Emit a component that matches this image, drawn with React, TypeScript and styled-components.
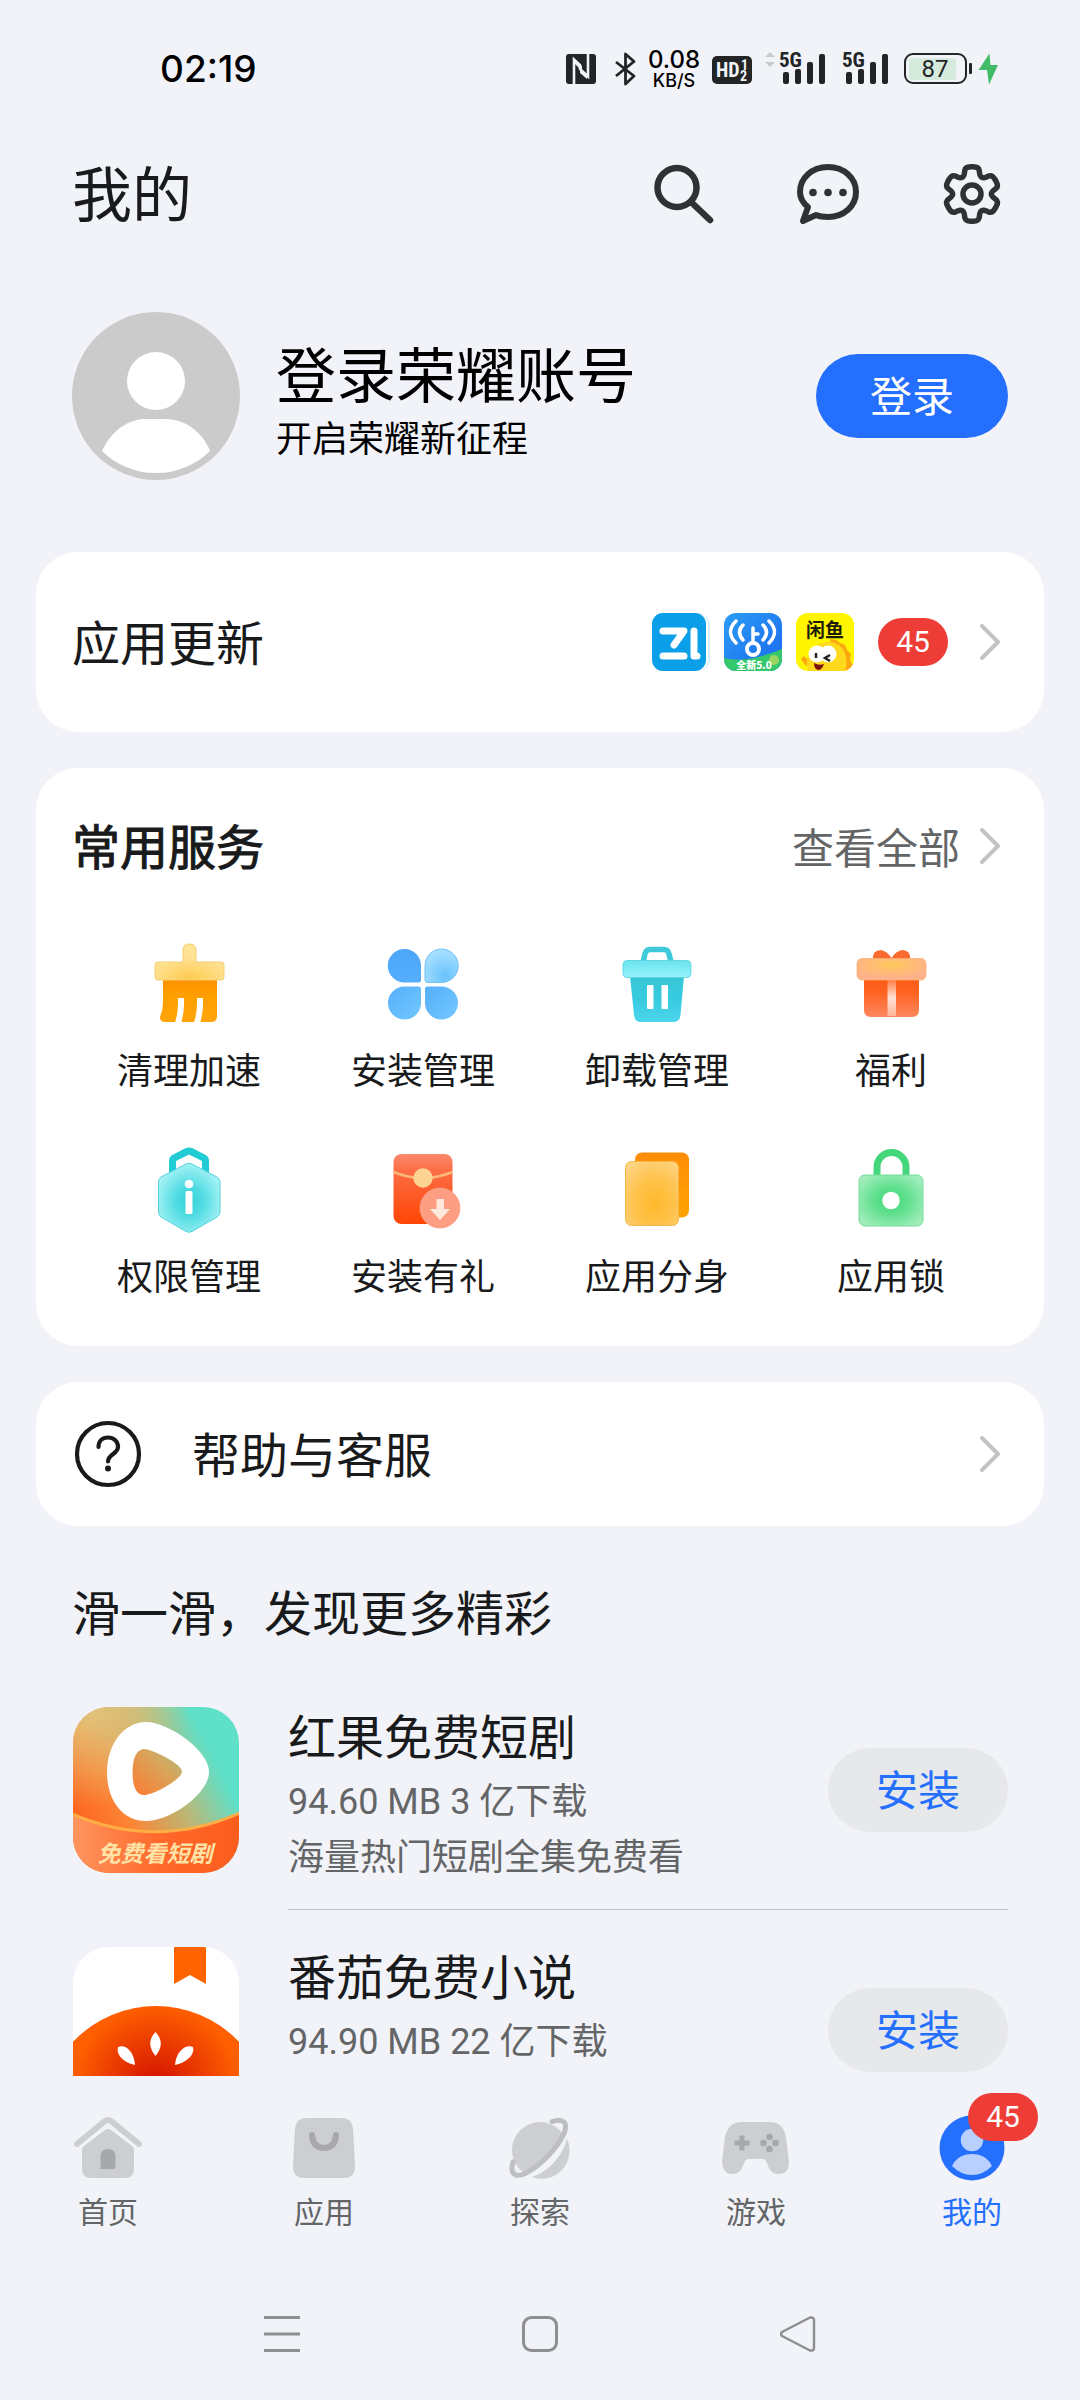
import React from "react";
import styled, { createGlobalStyle } from "styled-components";

const color = {
  page: "#f1f3f8",
  card: "#ffffff",
  ink: "#191a1b",
  muted: "#646567",
  blue: "#256fff",
  red: "#ee3d36",
  line: "#bfc0c5",
};
const cjk = '"Noto Sans CJK SC", "Noto Sans", sans-serif';
const latin = 'Roboto, "Noto Sans CJK SC", sans-serif';

const GlobalStyle = createGlobalStyle`
  * { box-sizing: border-box; }
  body { margin: 0; background: ${color.page}; }
  h1, h2, h3, p, ul { margin: 0; padding: 0; font-weight: 400; }
  ul { list-style: none; }
  button { border: 0; padding: 0; background: none; font: inherit; color: inherit; cursor: pointer; }
  a { color: inherit; text-decoration: none; }
  svg { display: block; flex: none; }
`;

const Screen = styled.div`
  display: flex;
  flex-direction: column;
  height: 100vh;
  background: ${color.page};
  color: ${color.ink};
  font-family: ${cjk};
`;

/* ---------- status bar ---------- */
const StatusBar = styled.div`
  flex: none;
  display: flex;
  align-items: center;
  justify-content: space-between;
  height: 138px;
  padding: 0 82px 0 160px;
  color: #000;
`;
const Clock = styled.time`
  font: 500 37px/44px Inter, sans-serif;
`;
const StatusIcons = styled.div`
  display: flex;
  align-items: center;
  gap: 12px;
`;
const NetSpeed = styled.div`
  display: flex;
  flex-direction: column;
  align-items: center;
  width: 52px;
  padding-top: 2px;
  white-space: nowrap;
  font: 500 24px/22px Inter, sans-serif;
  small {
    font-size: 18px;
    line-height: 20px;
  }
`;

/* ---------- header ---------- */
const Header = styled.header`
  flex: none;
  display: flex;
  align-items: center;
  justify-content: space-between;
  height: 112px;
  padding: 0 72px;
`;
const PageTitle = styled.h1`
  padding-bottom: 6px;
  font-size: 60px;
  line-height: 80px;
`;
const HeaderActions = styled.div`
  display: flex;
  gap: 72px;
`;

/* ---------- content ---------- */
const Content = styled.main`
  flex: 1;
  min-height: 0;
  overflow: hidden;
`;
const Profile = styled.section`
  display: flex;
  align-items: center;
  gap: 36px;
  padding: 62px 72px 72px;
  color: #000;
`;
const ProfileText = styled.div`
  flex: 1;
`;
const ProfileName = styled.h2`
  font-size: 60px;
  line-height: 80px;
`;
const ProfileHint = styled.p`
  font-size: 36px;
  line-height: 48px;
`;
const PillButton = styled.button<{ $primary?: boolean }>`
  flex: none;
  width: ${(p) => (p.$primary ? 192 : 180)}px;
  height: 84px;
  padding-bottom: 4px;
  border-radius: 42px;
  font-size: 42px;
  line-height: 56px;
  background: ${(p) => (p.$primary ? color.blue : "#e7e8e9")};
  color: ${(p) => (p.$primary ? "#fff" : color.blue)};
`;
const Cards = styled.div`
  display: flex;
  flex-direction: column;
  gap: 36px;
  padding: 0 36px;
`;
const Card = styled.section`
  padding: 0 36px;
  border-radius: 42px;
  background: ${color.card};
`;
const CardLink = styled.a<{ $tall?: boolean }>`
  display: flex;
  align-items: center;
  gap: 24px;
  height: ${(p) => (p.$tall ? 180 : 144)}px;
`;
const CardTitle = styled.h2<{ $strong?: boolean }>`
  flex: 1;
  padding-bottom: 4px;
  font-size: 48px;
  line-height: 64px;
  -webkit-text-stroke: ${(p) => (p.$strong ? "1px" : "0")} currentColor;
`;
const HelpTitle = styled(CardTitle)`
  padding-left: 24px;
`;
const AppIcons = styled.span`
  display: flex;
  gap: 14px;
`;
const Badge = styled.span`
  display: flex;
  align-items: center;
  justify-content: center;
  width: 70px;
  height: 48px;
  border-radius: 24px;
  background: ${color.red};
  color: #fff;
  font: 400 30px/36px ${latin};
`;
const ServicesHead = styled.div`
  display: flex;
  align-items: center;
  padding: 36px 0 48px;
  height: 168px;
`;
const MoreLink = styled.a`
  display: flex;
  align-items: center;
  gap: 12px;
  font-size: 42px;
  line-height: 56px;
  color: ${color.muted};
`;
const ServiceGrid = styled.ul`
  display: grid;
  grid-template-columns: repeat(4, 1fr);
  row-gap: 50px;
  padding-bottom: 48px;
`;
const ServiceButton = styled.button`
  display: flex;
  flex-direction: column;
  align-items: center;
  gap: 12px;
  width: 100%;
  font-size: 36px;
  line-height: 48px;
`;

/* ---------- recommendations ---------- */
const FeedTitle = styled.h2`
  padding: 52px 72px 28px;
  font-size: 48px;
  line-height: 64px;
`;
const FeedItem = styled.li`
  display: flex;
  align-items: center;
  gap: 48px;
  padding: 0 72px;
`;
const FeedBody = styled.div`
  flex: 1;
  display: flex;
  align-items: center;
  height: 240px;
  padding: 28px 0;
  border-bottom: 1px solid ${color.line};
`;
const FeedText = styled.div`
  flex: 1;
  align-self: stretch;
`;
const AppName = styled.h3`
  font-size: 48px;
  line-height: 72px;
`;
const AppMeta = styled.p`
  font-size: 36px;
  line-height: 56px;
  color: ${color.muted};
`;
const Figures = styled.span`
  font-family: ${latin};
  line-height: 40px;
`;

/* ---------- bottom bars ---------- */
const TabBar = styled.nav`
  flex: none;
  display: grid;
  grid-template-columns: repeat(5, 1fr);
  padding: 36px 0 38px;
`;
const Tab = styled.a<{ $active?: boolean }>`
  display: flex;
  flex-direction: column;
  align-items: center;
  gap: 6px;
  font-size: 30px;
  line-height: 40px;
  color: ${(p) => (p.$active ? color.blue : color.muted)};
`;
const TabIcon = styled.span`
  position: relative;
`;
const TabBadge = styled(Badge)`
  position: absolute;
  left: 32px;
  top: -19px;
`;
const SystemBar = styled.div`
  flex: none;
  display: flex;
  align-items: center;
  justify-content: center;
  gap: 222px;
  height: 132px;
`;

/* ---------- drawings ---------- */
const Chevron = () => (
  <svg width="36" height="36" viewBox="0 0 36 36" fill="none" stroke="#c3c4c6" strokeWidth="4" strokeLinecap="round" strokeLinejoin="round">
    <path d="M10 2L26 18L10 34" />
  </svg>
);

const narrow = { fontFamily: '"Liberation Sans Narrow", "Roboto Condensed", "Liberation Sans", sans-serif', fontWeight: 700 };

const Nfc = () => (
  <svg width="37" height="36" viewBox="0 0 37 36">
    <rect y="3" width="30" height="30" rx="3" fill="#222426" />
    <path d="M8 33V8.500L14 14V18L22 25.500V3" fill="none" stroke={color.page} strokeWidth="2.600" />
    <path d="M9 10L16 15V20L9 13ZM14 19L21 24V28L14 22Z" fill={color.page} />
  </svg>
);
const Bluetooth = () => (
  <svg width="21" height="36" viewBox="0 0 21 36" fill="none" stroke="#222426" strokeWidth="2.800" strokeLinejoin="round">
    <path d="M1 11L19 25L10.500 33V3L19 10.500L1 25" />
  </svg>
);
const HdBadge = () => (
  <svg width="40" height="36" viewBox="0 0 40 36" fill={color.page} style={narrow}>
    <rect y="5" width="40" height="28" rx="5" fill="#222426" />
    <text x="4" y="26" fontSize="20">HD</text>
    <text x="29" y="19" fontSize="14">1</text>
    <text x="28" y="30" fontSize="14">2</text>
  </svg>
);
const Signal = ({ arrows }: { arrows?: boolean }) => {
  const left = arrows ? 15 : 0;
  const width = arrows ? 66 : 50;
  return (
    <svg width={width} height="48" viewBox={`0 -6 ${width} 48`} fill="#222426" style={narrow}>
      {arrows && <path d="M1 6L6 1L11 6ZM1 11H11L6 16Z" fill="#c9cacd" />}
      <text x={left} y="16" fontSize="21">5G</text>
      {[21, 18, 11, 3].map((top, i) => (
        <rect key={top} x={left + 4 + i * 12} y={top} width="6" height={33 - top} rx="2" />
      ))}
    </svg>
  );
};
const Battery = () => (
  <svg width="94" height="36" viewBox="0 0 94 36">
    <rect x="5" y="7" width="47" height="22" rx="3" fill="#d5e9dd" />
    <rect x="1" y="3" width="61" height="29" rx="8" fill="none" stroke="#222426" strokeWidth="2" />
    <rect x="65" y="12" width="3" height="11" rx="1" fill="#222426" />
    <text x="31" y="26" fontSize="24" textAnchor="middle" fontFamily="Roboto, sans-serif" fill="#222426">87</text>
    <path d="M85.500 2.500L74.500 19H83L85 33.500L94 14H86.500Z" fill="#42bb68" />
  </svg>
);

const SearchIcon = () => (
  <svg width="72" height="72" viewBox="0 0 72 72" fill="none" stroke="#2f3133" strokeWidth="6.500" strokeLinecap="round">
    <circle cx="29" cy="29.500" r="19.500" />
    <path d="M43 44L62 62" />
  </svg>
);
const ChatIcon = () => (
  <svg width="72" height="72" viewBox="0 0 72 72" fill="none" stroke="#2f3133" strokeWidth="6" strokeLinejoin="round">
    <path d="M24 57L11 63L16 49C11 45 8 40 8 34C8 20 20 9 36 9S64 20 64 34S52 59 36 59C31.500 59 27.500 58.500 24 57Z" />
    <g fill="#2f3133" stroke="none">
      <circle cx="21" cy="34.500" r="3.800" />
      <circle cx="36" cy="34.500" r="3.800" />
      <circle cx="51" cy="34.500" r="3.800" />
    </g>
  </svg>
);
/* Six teeth around the hub; every corner is cut back a third of its sides and rounded. */
const gearCorners = [0, 60, 120, 180, 240, 300].flatMap((tooth) =>
  [[-24, 19.5], [-14, 28], [14, 28], [24, 19.5]].map(([offset, r]) => {
    const a = ((tooth + offset - 90) * Math.PI) / 180;
    return [36 + r * Math.cos(a), 36 + r * Math.sin(a)];
  })
);
const gearPath =
  gearCorners
    .map((corner, i) => {
      const before = gearCorners[(i + 23) % 24];
      const after = gearCorners[(i + 1) % 24];
      const toward = (p: number[]) => [0, 1].map((k) => (corner[k] + (p[k] - corner[k]) * 0.42).toFixed(2)).join(" ");
      const at = corner.map((v) => v.toFixed(2)).join(" ");
      return `${i ? "L" : "M"}${toward(before)}Q${at} ${toward(after)}`;
    })
    .join("") + "Z";
const GearIcon = () => (
  <svg width="72" height="72" viewBox="0 0 72 72" fill="none" stroke="#2f3133" strokeWidth="5.500" strokeLinejoin="round">
    <path d={gearPath} />
    <circle cx="36" cy="36" r="9" />
  </svg>
);

const Avatar = () => (
  <svg width="168" height="168" viewBox="0 0 168 168" fill="#fff">
    <circle cx="84" cy="84" r="84" fill="#cbcbcb" />
    <circle cx="84" cy="69" r="29" />
    <path d="M30 139C40 117 58 107 74 107H94C112 107 130 119 138 139A77 77 0 0 1 30 139Z" />
  </svg>
);

const ZhihangApp = () => (
  <svg width="58" height="58" viewBox="0 0 58 58">
    <rect width="58" height="58" rx="12" fill="#d9effb" />
    <rect width="56" height="58" rx="11" fill="#fff" />
    <rect width="54" height="58" rx="11" fill="#0a9fe8" />
    <path d="M11 18H32L22 32M11 43H32M42 18V43H45" fill="none" stroke="#fff" strokeWidth="7" strokeLinecap="round" strokeLinejoin="round" />
  </svg>
);
const WifiKeyApp = () => (
  <svg width="58" height="58" viewBox="0 0 58 58">
    <defs>
      <clipPath id="wifiClip"><rect width="58" height="58" rx="12" /></clipPath>
      <linearGradient id="wifiBlue" x1="0" y1="0" x2="1" y2="1">
        <stop offset="0" stopColor="#2b9cf5" />
        <stop offset="1" stopColor="#1968ee" />
      </linearGradient>
    </defs>
    <g clipPath="url(#wifiClip)">
      <rect width="58" height="58" fill="url(#wifiBlue)" />
      <path d="M0 45Q22 51 58 36V58H0Z" fill="#35c76b" />
      <circle cx="50" cy="47" r="5" fill="#9bd663" />
      <g fill="none" stroke="#fff" strokeWidth="3.500" strokeLinecap="round">
        <path d="M12 8Q1 19 12 30M19 12Q12 19 19 27M45 8Q56 19 45 30M39 12Q46 19 39 27" />
        <circle cx="29" cy="36" r="6" strokeWidth="4" />
        <path d="M29 30V15M29 21H34" />
      </g>
      <text x="30" y="56" fontSize="10" fontWeight="900" textAnchor="middle" fill="#fff">全新5.0</text>
    </g>
  </svg>
);
const XianyuApp = () => (
  <svg width="58" height="58" viewBox="0 0 58 58">
    <defs>
      <clipPath id="fishClip"><rect width="58" height="58" rx="12" /></clipPath>
    </defs>
    <g clipPath="url(#fishClip)">
      <rect width="58" height="58" fill="#fff500" />
      <path d="M34 26L40 27L44 30L49 32L51 37L55 41L54 47L57 52L54 58H40Z" fill="#fca70f" />
      <path d="M5 46L8 43L13 48L10 53Z" fill="#fca70f" />
      <path d="M12 58C8 42 16 31 31 29C46 28 54 42 49 58Z" fill="#ffd91c" />
      <circle cx="21" cy="41" r="8.500" fill="#fff" />
      <circle cx="32" cy="41" r="8.500" fill="#fff" />
      <path d="M20 40V45M34 42L29 45L34 48" fill="none" stroke="#222" strokeWidth="2.500" />
      <path d="M18 50Q23 53 28 51Q26 57 22 57Q18 56 18 50Z" fill="#7b1410" />
      <text x="29" y="24" fontSize="19" fontWeight="700" textAnchor="middle" fill="#1c1b08">闲鱼</text>
    </g>
  </svg>
);

const BroomIcon = () => (
  <svg width="96" height="96" viewBox="0 0 96 96">
    <defs>
      <linearGradient id="bristle" x1="0" y1="0" x2="0" y2="1">
        <stop offset="0" stopColor="#fb8f00" />
        <stop offset=".4" stopColor="#ff9f00" />
        <stop offset="1" stopColor="#ffa409" />
      </linearGradient>
      <radialGradient id="broomHead" cx=".5" cy=".95" r=".6">
        <stop offset="0" stopColor="#ffcb50" />
        <stop offset="1" stopColor="#ffe294" />
      </radialGradient>
    </defs>
    <path d="M22 42H76V80Q76 86 70 86H24Q19 86 19 81Q22 74 22 66Z" fill="url(#bristle)" />
    <path d="M40 62V68Q40 77 37 87M59 62V68Q59 77 56 87" fill="none" stroke="#fff" strokeWidth="6" />
    <path d="M42 14Q42 8 48 8Q55 8 55 14V26H80Q83 26 83 29V41Q83 44 80 44H17Q14 44 14 41V29Q14 26 17 26H42Z" fill="url(#broomHead)" stroke="#f3cf74" strokeWidth="1" />
  </svg>
);
const CloverIcon = () => (
  <svg width="96" height="96" viewBox="0 0 96 96">
    <defs>
      <linearGradient id="leafA" x1="0" y1="0" x2="0" y2="1">
        <stop offset="0" stopColor="#4ba6f9" />
        <stop offset="1" stopColor="#54aefc" />
      </linearGradient>
      <radialGradient id="leafB" cx=".6" cy=".8" r=".8">
        <stop offset="0" stopColor="#69c3fd" />
        <stop offset="1" stopColor="#aae1ff" />
      </radialGradient>
      <linearGradient id="leafC" x1="0" y1="0" x2="1" y2="1">
        <stop offset="0" stopColor="#55affc" />
        <stop offset="1" stopColor="#72c8fd" />
      </linearGradient>
    </defs>
    <path d="M29.500 13A16.500 16.500 0 0 1 46 29.500V44Q46 46.500 43.500 46.500H29.500A16.500 16.500 0 0 1 29.500 13Z" fill="url(#leafA)" />
    <path d="M66.500 13A16.500 16.500 0 0 1 66.500 46.500H52.500Q50 46.500 50 44V29.500A16.500 16.500 0 0 1 66.500 13Z" fill="url(#leafB)" stroke="#5bb4f5" strokeWidth=".8" />
    <path d="M29.500 50.500H43.500Q46 50.500 46 53V67.500A16.500 16.500 0 1 1 29.500 50.500Z" fill="url(#leafC)" />
    <path d="M52.500 50.500H66.500A16.500 16.500 0 1 1 50 67.500V53Q50 50.500 52.500 50.500Z" fill="url(#leafC)" />
  </svg>
);
const TrashIcon = () => (
  <svg width="96" height="96" viewBox="0 0 96 96">
    <defs>
      <linearGradient id="bin" x1="0" y1="0" x2="0" y2="1">
        <stop offset="0" stopColor="#35c5d6" />
        <stop offset=".5" stopColor="#38cbe0" />
        <stop offset="1" stopColor="#4cd5ec" />
      </linearGradient>
      <linearGradient id="binLid" x1="0" y1="0" x2="0" y2="1">
        <stop offset="0" stopColor="#68e3ee" />
        <stop offset="1" stopColor="#97f3fb" />
      </linearGradient>
    </defs>
    <path d="M34 26L36 18Q37 13.500 41 13.500H55Q59 13.500 60 18L62 26" fill="none" stroke="#3fcadb" strokeWidth="5.500" />
    <path d="M21 40H75L71.500 79Q71 86 64 86H32Q25.500 86 25 79Z" fill="url(#bin)" />
    <rect x="14" y="24.500" width="68" height="17" rx="4" fill="url(#binLid)" stroke="#57cfdd" strokeWidth=".8" />
    <rect x="38" y="49" width="6.500" height="24" rx="1" fill="#fff" />
    <rect x="52.500" y="49" width="6.500" height="24" rx="1" fill="#fff" />
  </svg>
);
const GiftIcon = () => (
  <svg width="96" height="96" viewBox="0 0 96 96">
    <defs>
      <linearGradient id="giftBox" x1="0" y1="0" x2="0" y2="1">
        <stop offset="0" stopColor="#fb5b11" />
        <stop offset=".4" stopColor="#ff6524" />
        <stop offset="1" stopColor="#fd875f" />
      </linearGradient>
      <radialGradient id="giftLid" cx=".5" cy=".3" r=".6">
        <stop offset="0" stopColor="#ffc95c" />
        <stop offset="1" stopColor="#ffb28a" />
      </radialGradient>
      <linearGradient id="ribbon" x1="0" y1="0" x2="0" y2="1">
        <stop offset="0" stopColor="#ff7d42" />
        <stop offset=".5" stopColor="#ffe2d6" />
        <stop offset="1" stopColor="#ffb498" />
      </linearGradient>
    </defs>
    <path d="M30 24Q29 14 38 14Q44 15 48.500 22Q53 15 59 14Q68 14 67 24Z" fill="#fb6a2f" />
    <path d="M21 42H76V74Q76 81 69 81H28Q21 81 21 74Z" fill="url(#giftBox)" />
    <rect x="44.500" y="44" width="8.500" height="36" fill="url(#ribbon)" />
    <rect x="14" y="22.500" width="69" height="21.500" rx="5" fill="url(#giftLid)" stroke="#f6b078" strokeWidth=".8" />
  </svg>
);
const PermissionIcon = () => (
  <svg width="96" height="96" viewBox="0 0 96 96">
    <defs>
      <radialGradient id="shield" cx=".5" cy=".55" r=".55">
        <stop offset="0" stopColor="#2fd2da" />
        <stop offset=".4" stopColor="#50dce2" />
        <stop offset="1" stopColor="#a5f2f5" />
      </radialGradient>
    </defs>
    <path d="M31.500 34V19Q31.500 17 33 16L46 9.500Q48 8.500 50 9.500L63 16Q64.500 17 64.500 19V34" fill="none" stroke="#22ccd4" strokeWidth="7" />
    <path d="M45 22Q48 20.500 51 22L76 35Q79 37 79 40V70Q79 73 76 75L51 89.500Q48 91 45 89.500L20 75Q17.500 73 17.500 70V40Q17.500 37 20 35Z" fill="url(#shield)" stroke="#55d3da" strokeWidth="1" />
    <circle cx="48" cy="42" r="4.300" fill="#fff" />
    <rect x="44.500" y="49" width="7" height="23" rx="1.500" fill="#fff" />
  </svg>
);
const RedPacketIcon = () => (
  <svg width="96" height="96" viewBox="0 0 96 96">
    <defs>
      <linearGradient id="packet" x1="0" y1="0" x2="0" y2="1">
        <stop offset="0" stopColor="#fa8a6c" />
        <stop offset=".25" stopColor="#fd6c44" />
        <stop offset=".6" stopColor="#fe5a26" />
        <stop offset="1" stopColor="#ff4503" />
      </linearGradient>
    </defs>
    <rect x="18.500" y="12" width="59" height="70" rx="8" fill="url(#packet)" />
    <path d="M18.500 30Q48 42 77.500 30" fill="none" stroke="#ffb877" strokeWidth="2.500" />
    <circle cx="48" cy="36" r="9.700" fill="#fdd493" />
    <circle cx="65" cy="66" r="20" fill="#fd9d82" stroke="#f5a08b" strokeWidth=".8" />
    <path d="M61.500 57H69V67H75L65 78L55 67H61.500Z" fill="#ffe9dc" />
  </svg>
);
const CloneIcon = () => (
  <svg width="96" height="96" viewBox="0 0 96 96">
    <defs>
      <linearGradient id="cloneBack" x1="0" y1="0" x2="0" y2="1">
        <stop offset="0" stopColor="#fd8d06" />
        <stop offset="1" stopColor="#ffa405" />
      </linearGradient>
      <radialGradient id="cloneFront" cx=".55" cy=".65" r=".75">
        <stop offset="0" stopColor="#ffb92c" />
        <stop offset=".5" stopColor="#ffc24b" />
        <stop offset="1" stopColor="#ffd483" />
      </radialGradient>
    </defs>
    <rect x="26" y="10.500" width="54" height="65" rx="7" fill="url(#cloneBack)" />
    <rect x="16.500" y="19.500" width="53" height="64" rx="6" fill="url(#cloneFront)" stroke="#f2b748" strokeWidth="1" />
  </svg>
);
const LockIcon = () => (
  <svg width="96" height="96" viewBox="0 0 96 96">
    <defs>
      <radialGradient id="lockBody" cx=".5" cy=".5" r=".6">
        <stop offset="0" stopColor="#46d879" />
        <stop offset=".4" stopColor="#5cdf8b" />
        <stop offset="1" stopColor="#a0edbb" />
      </radialGradient>
    </defs>
    <path d="M34 34V25A14 14 0 0 1 63 25V34" fill="none" stroke="#43d67a" strokeWidth="7" />
    <rect x="16" y="33" width="64" height="51" rx="6" fill="url(#lockBody)" stroke="#74dc98" strokeWidth="1" />
    <circle cx="48" cy="58.500" r="8.700" fill="#fff" />
  </svg>
);

const HelpIcon = () => (
  <svg width="72" height="72" viewBox="0 0 72 72" fill="none" stroke="#191a1b" strokeWidth="4.200" strokeLinecap="round">
    <circle cx="36" cy="36" r="31" />
    <path d="M26.500 29C26.500 23 30.500 19.500 36 19.500S46 23 46 29C46 36 36 36 36 43.500" />
    <circle cx="36" cy="50.500" r="3" fill="#191a1b" stroke="none" />
  </svg>
);

const DramaApp = () => (
  <svg width="168" height="168" viewBox="0 0 168 168">
    <defs>
      <clipPath id="dramaClip"><rect x="1" y="1" width="166" height="166" rx="36" /></clipPath>
      <linearGradient id="dramaBase" x1="0" y1=".75" x2="1" y2=".25">
        <stop offset="0" stopColor="#ff5d1c" />
        <stop offset=".3" stopColor="#fb8534" />
        <stop offset=".6" stopColor="#b9b878" />
        <stop offset=".85" stopColor="#5fe0c8" />
      </linearGradient>
      <radialGradient id="dramaWarm" cx=".1" cy="0" r=".6">
        <stop offset="0" stopColor="#e0c67e" />
        <stop offset="1" stopColor="#e0c67e" stopOpacity="0" />
      </radialGradient>
      <linearGradient id="dramaInner" x1="0" y1="1" x2="1" y2="0">
        <stop offset="0" stopColor="#fb7b30" />
        <stop offset=".6" stopColor="#d9a45a" />
        <stop offset="1" stopColor="#a9be82" />
      </linearGradient>
      <linearGradient id="dramaBand" x1="0" y1="0" x2="1" y2="0">
        <stop offset="0" stopColor="#ff9560" />
        <stop offset=".5" stopColor="#ff6a2c" />
        <stop offset="1" stopColor="#fb5c1c" />
      </linearGradient>
    </defs>
    <g clipPath="url(#dramaClip)">
      <rect width="168" height="168" fill="url(#dramaBase)" />
      <rect width="168" height="168" fill="url(#dramaWarm)" />
      <path d="M0 108Q84 144 168 107V168H0Z" fill="url(#dramaBand)" />
      <path d="M0 108Q84 144 168 107" fill="none" stroke="#ffad45" strokeWidth="3" />
      <path d="M35 66C35 38 52 16 74 16C96 16 137 44 137 66C137 88 98 115 74 115C50 115 35 94 35 66Z" fill="#fff" />
      <path d="M60.500 66C60.500 52 65 43 72 43C80 43 110 58 110 65.500C110 73 82 89 72 89C64 89 60.500 80 60.500 66Z" fill="url(#dramaInner)" />
      <text x="83" y="156" fontSize="23" fontWeight="700" fontStyle="italic" textAnchor="middle" fill="#ffe2a6">免费看短剧</text>
    </g>
  </svg>
);
const NovelApp = () => (
  <svg width="168" height="168" viewBox="0 0 168 168">
    <defs>
      <clipPath id="novelClip"><rect x="1" y="1" width="166" height="166" rx="36" /></clipPath>
      <radialGradient id="tomato" gradientUnits="userSpaceOnUse" cx="84" cy="142" r="88">
        <stop offset="0" stopColor="#d00c00" />
        <stop offset=".4" stopColor="#e43000" />
        <stop offset=".95" stopColor="#ff5f00" />
      </radialGradient>
    </defs>
    <g clipPath="url(#novelClip)">
      <rect width="168" height="168" fill="#fff" />
      <circle cx="84" cy="174" r="114" fill="url(#tomato)" />
      <path d="M102 0H134V38L118 29L102 38Z" fill="#fd6400" />
      <g fill="#fff">
        <path d="M83.500 86Q94 97 83.500 110Q73 97 83.500 86Z" />
        <path d="M63 119C50 116 44 108 46 101C54 98 62 106 63 119Z" />
        <path d="M103 119C116 116 123 108 121 101C113 98 104 106 103 119Z" />
      </g>
    </g>
  </svg>
);

const tabGrey = "#cdced0";
const tabDark = "#a7a8aa";
const HomeTab = () => (
  <svg width="72" height="72" viewBox="0 0 72 72" fill={tabGrey}>
    <path d="M5 32L33 9Q36 7 39 9L67 32" fill="none" stroke={tabGrey} strokeWidth="6" strokeLinecap="round" />
    <path d="M33 18Q36 16 39 18L60 34Q62 36 62 38V57Q62 66 53 66H19Q10 66 10 57V38Q10 36 12 34Z" />
    <path d="M28.500 57V45Q28.500 37 36 37T43.500 45V55Q43.500 57 41.500 57Z" fill={tabDark} />
  </svg>
);
const AppsTab = () => (
  <svg width="72" height="72" viewBox="0 0 72 72">
    <path d="M19 6H53Q64 6 65 17L67 54Q67 66 56 66H16Q5 66 5 54L7 17Q8 6 19 6Z" fill={tabGrey} />
    <path d="M24 23Q25 36 36 36T48 23" fill="none" stroke={tabDark} strokeWidth="6" strokeLinecap="round" />
  </svg>
);
const ExploreTab = () => (
  <svg width="72" height="72" viewBox="0 0 72 72" fill="none">
    <circle cx="36" cy="38" r="28" fill={tabGrey} />
    <g transform="translate(35 36) rotate(-46)">
      <path d="M-36 -1A36 13 0 0 0 36 -1V26H-36Z" transform="translate(0 2)" fill={color.page} />
    </g>
    <path d="M63 27A28 28 0 0 1 28 65C42 61 58 46 63 27Z" fill={tabGrey} />
    <g transform="translate(35 36) rotate(-46)" stroke="#bebfc1" strokeWidth="5" strokeLinecap="round">
      <path d="M-28 -9C-34 -6 -36 -3 -36 0C-36 7 -20 12 0 12S36 7 36 0C36 -3 34 -6 28 -9" />
    </g>
  </svg>
);
const GamesTab = () => (
  <svg width="72" height="72" viewBox="0 0 72 72" fill={tabDark}>
    <path d="M22 10H50Q63 10 66 25L69 50Q69 62 59 62Q52 62 49 56L46 49Q45 47 43 47H28Q26 47 25 49L22 56Q19 62 12 62Q3 62 2 50L5 25Q8 10 22 10Z" fill={tabGrey} />
    <path d="M19.500 23.500H24.500V28.500H29.500V33.500H24.500V38.500H19.500V33.500H14.500V28.500H19.500Z" />
    <circle cx="49.500" cy="25" r="3.300" />
    <circle cx="49.500" cy="37" r="3.300" />
    <circle cx="43.500" cy="31" r="3.300" />
    <circle cx="55.500" cy="31" r="3.300" />
  </svg>
);
const MineTab = () => (
  <svg width="72" height="72" viewBox="0 0 72 72" fill="#b9d0ff">
    <circle cx="36" cy="36" r="32.500" fill={color.blue} />
    <circle cx="36" cy="28" r="11.200" />
    <path d="M16 54Q22 42 36 42T56 54Q47 63 36 63T16 54Z" />
  </svg>
);

const services = [
  { label: "清理加速", icon: <BroomIcon /> },
  { label: "安装管理", icon: <CloverIcon /> },
  { label: "卸载管理", icon: <TrashIcon /> },
  { label: "福利", icon: <GiftIcon /> },
  { label: "权限管理", icon: <PermissionIcon /> },
  { label: "安装有礼", icon: <RedPacketIcon /> },
  { label: "应用分身", icon: <CloneIcon /> },
  { label: "应用锁", icon: <LockIcon /> },
];
const feed = [
  { name: "红果免费短剧", figures: "94.60 MB 3", intro: "海量热门短剧全集免费看", icon: <DramaApp /> },
  { name: "番茄免费小说", figures: "94.90 MB 22", intro: "", icon: <NovelApp /> },
];
const tabs = [
  { label: "首页", icon: <HomeTab /> },
  { label: "应用", icon: <AppsTab /> },
  { label: "探索", icon: <ExploreTab /> },
  { label: "游戏", icon: <GamesTab /> },
  { label: "我的", icon: <MineTab />, badge: 45 },
];

export default function App() {
  return (
    <Screen>
      <GlobalStyle />
      <StatusBar>
        <Clock>02:19</Clock>
        <StatusIcons>
          <Nfc />
          <Bluetooth />
          <NetSpeed>
            <span>0.08</span>
            <small>KB/S</small>
          </NetSpeed>
          <HdBadge />
          <Signal arrows />
          <Signal />
          <Battery />
        </StatusIcons>
      </StatusBar>

      <Header>
        <PageTitle>我的</PageTitle>
        <HeaderActions>
          <button aria-label="搜索"><SearchIcon /></button>
          <button aria-label="消息"><ChatIcon /></button>
          <button aria-label="设置"><GearIcon /></button>
        </HeaderActions>
      </Header>

      <Content>
        <Profile>
          <Avatar />
          <ProfileText>
            <ProfileName>登录荣耀账号</ProfileName>
            <ProfileHint>开启荣耀新征程</ProfileHint>
          </ProfileText>
          <PillButton $primary>登录</PillButton>
        </Profile>

        <Cards>
          <Card>
            <CardLink href="#updates" $tall>
              <CardTitle>应用更新</CardTitle>
              <AppIcons>
                <ZhihangApp />
                <WifiKeyApp />
                <XianyuApp />
              </AppIcons>
              <Badge>45</Badge>
              <Chevron />
            </CardLink>
          </Card>

          <Card>
            <ServicesHead>
              <CardTitle $strong>常用服务</CardTitle>
              <MoreLink href="#services">查看全部<Chevron /></MoreLink>
            </ServicesHead>
            <ServiceGrid>
              {services.map((s) => (
                <li key={s.label}>
                  <ServiceButton>{s.icon}{s.label}</ServiceButton>
                </li>
              ))}
            </ServiceGrid>
          </Card>

          <Card>
            <CardLink href="#help">
              <HelpIcon />
              <HelpTitle>帮助与客服</HelpTitle>
              <Chevron />
            </CardLink>
          </Card>
        </Cards>

        <FeedTitle>滑一滑，发现更多精彩</FeedTitle>
        <ul>
          {feed.map((app) => (
            <FeedItem key={app.name}>
              {app.icon}
              <FeedBody>
                <FeedText>
                  <AppName>{app.name}</AppName>
                  <AppMeta><Figures>{app.figures} </Figures>亿下载</AppMeta>
                  {app.intro && <AppMeta>{app.intro}</AppMeta>}
                </FeedText>
                <PillButton>安装</PillButton>
              </FeedBody>
            </FeedItem>
          ))}
        </ul>
      </Content>

      <TabBar>
        {tabs.map((t) => (
          <Tab key={t.label} href={`#${t.label}`} $active={Boolean(t.badge)}>
            <TabIcon>
              {t.icon}
              {t.badge && <TabBadge>{t.badge}</TabBadge>}
            </TabIcon>
            {t.label}
          </Tab>
        ))}
      </TabBar>

      <SystemBar>
        <button aria-label="最近任务">
          <svg width="36" height="36" viewBox="0 0 36 36" stroke="#8e8f92" strokeWidth="3">
            <path d="M0 1.500H36M0 18H36M0 34.500H36" />
          </svg>
        </button>
        <button aria-label="主屏幕">
          <svg width="36" height="36" viewBox="0 0 36 36" fill="none" stroke="#8e8f92" strokeWidth="3">
            <rect x="1.500" y="1.500" width="33" height="33" rx="8" />
          </svg>
        </button>
        <button aria-label="返回">
          <svg width="36" height="36" viewBox="0 0 36 36" fill="none" stroke="#8e8f92" strokeWidth="2.500" strokeLinejoin="round">
            <path d="M2 16L30 1.500Q34 1 34 4V32Q34 35 30 34.500L2 20Q0 18 2 16Z" />
          </svg>
        </button>
      </SystemBar>
    </Screen>
  );
}
